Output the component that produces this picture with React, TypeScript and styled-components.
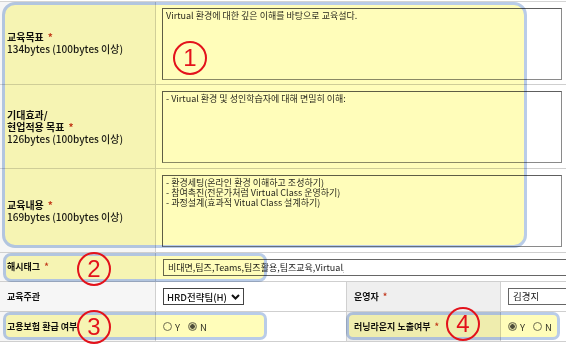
import React from "react";
import styled, { createGlobalStyle } from "styled-components";

const GlobalStyle = createGlobalStyle`
  body {
    margin: 0;
    background: #ffffff;
    font-family: "Noto Sans CJK KR", "Noto Sans", sans-serif;
    color: #222;
  }
`;

const Page = styled.div`
  position: relative;
  width: 566px;
  height: 353px;
  overflow: hidden;
  background: #fff;
`;

const Table = styled.div`
  display: grid;
  grid-template-columns: 156px 190px 155px 1fr;
  margin-top: 1px;
  border-top: 1px solid #d4d4d4;
`;

const LabelCell = styled.div<{ $h: number; $small?: boolean }>`
  grid-column: 1;
  height: ${(p) => p.$h}px;
  box-sizing: border-box;
  padding-left: 7px;
  display: flex;
  flex-direction: column;
  justify-content: center;
  background: #f6f6f6;
  border-right: 1px solid #d0d0d0;
  border-bottom: 1px solid #cfcfcf;
  font-size: ${(p) => (p.$small ? 9 : 10)}px;
  line-height: 12px;
`;

const SideLabel = styled(LabelCell)`
  grid-column: 3;
  border-left: 1px solid #d0d0d0;
  background: #efefef;
`;

const Strong = styled.span`
  font-weight: 700;
  color: #111;
`;

const Req = styled.span`
  color: #c23b22;
  font-weight: 700;
  margin-left: 4px;
`;

const Sub = styled.span`
  font-weight: 500;
  color: #1a1a1a;
`;

const ValueCell = styled.div<{ $span?: string; $h: number }>`
  grid-column: ${(p) => p.$span || "2 / 5"};
  height: ${(p) => p.$h}px;
  box-sizing: border-box;
  padding: 6px 4px 0 6px;
  border-bottom: 1px solid #cfcfcf;
  display: flex;
  align-items: flex-start;
`;

const InlineCell = styled(ValueCell)`
  align-items: center;
  padding: 0 0 0 7px;
`;

const TextBox = styled.div`
  width: 100%;
  height: 72px;
  box-sizing: border-box;
  border: 1px solid #5e5e5e;
  border-right-color: #8a8a8a;
  border-bottom-color: #8a8a8a;
  padding: 2px 3px;
  font-size: 9px;
  line-height: 10px;
  color: #2a2a2a;
  white-space: pre-line;
  overflow: hidden;
`;

const InputBox = styled.div`
  width: 100%;
  height: 17px;
  box-sizing: border-box;
  border: 1px solid #666;
  border-right: none;
  padding: 0 4px;
  font-size: 9.5px;
  line-height: 15px;
  color: #222;
  white-space: nowrap;
  overflow: hidden;
`;

const Clip = styled.span`
  display: inline-block;
  width: 176px;
  overflow: hidden;
  vertical-align: top;
  font-size: 9px;
`;

const Select = styled.div`
  height: 17px;
  box-sizing: border-box;
  border: 1px solid #444;
  padding: 0 3px;
  display: flex;
  align-items: center;
  gap: 4px;
  font-size: 9.5px;
  font-weight: 500;
  color: #111;
`;

const RadioGroup = styled.div`
  display: flex;
  align-items: center;
  gap: 3px;
  font-size: 9.5px;
  color: #333;
`;

const Radio = styled.span<{ $on?: boolean; $first?: boolean }>`
  width: 7px;
  height: 7px;
  border-radius: 50%;
  border: 1px solid #6f6f6f;
  background: ${(p) => (p.$on ? "radial-gradient(circle, #4d4d4d 0 2px, #d8d8d8 2.5px)" : "#fff")};
  margin-left: ${(p) => (p.$first ? 0 : 5)}px;
`;

const Highlight = styled.div<{ $x: number; $y: number; $w: number; $h: number; $r: number }>`
  position: absolute;
  left: ${(p) => p.$x}px;
  top: ${(p) => p.$y}px;
  width: ${(p) => p.$w}px;
  height: ${(p) => p.$h}px;
  box-sizing: border-box;
  border: 3px solid #b9cce8;
  border-radius: ${(p) => p.$r}px;
  background: rgb(255, 253, 186);
  mix-blend-mode: multiply;
  pointer-events: none;
`;

const Badge = styled.div<{ $x: number; $y: number }>`
  position: absolute;
  left: ${(p) => p.$x - 17}px;
  top: ${(p) => p.$y - 17}px;
  width: 34px;
  height: 34px;
  box-sizing: border-box;
  border: 2px solid #e3121b;
  border-radius: 50%;
  display: flex;
  align-items: center;
  justify-content: center;
  color: #e3121b;
  font-family: "Liberation Sans", Arial, sans-serif;
  font-size: 24px;
  line-height: 1;
`;

const Chevron = () => (
  <svg width="9" height="6" viewBox="0 0 9 6">
    <path d="M1 1 L4.5 4.5 L8 1" fill="none" stroke="#111" strokeWidth="2" />
  </svg>
);

export default function App() {
  return (
    <Page>
      <GlobalStyle />
      <Table>
        <LabelCell $h={83}>
          <div>
            <Strong>교육목표</Strong>
            <Req>*</Req>
          </div>
          <Sub>134bytes (100bytes 이상)</Sub>
        </LabelCell>
        <ValueCell $h={83}>
          <TextBox>Virtual 환경에 대한 깊은 이해를 바탕으로 교육설다.</TextBox>
        </ValueCell>

        <LabelCell $h={84}>
          <Strong>기대효과/</Strong>
          <div>
            <Strong>현업적용 목표</Strong>
            <Req>*</Req>
          </div>
          <Sub>126bytes (100bytes 이상)</Sub>
        </LabelCell>
        <ValueCell $h={84}>
          <TextBox>- Virtual 환경 및 성인학습자에 대해 면밀히 이해:</TextBox>
        </ValueCell>

        <LabelCell $h={84}>
          <div>
            <Strong>교육내용</Strong>
            <Req>*</Req>
          </div>
          <Sub>169bytes (100bytes 이상)</Sub>
        </LabelCell>
        <ValueCell $h={84}>
          <TextBox>
            {"- 환경세팅(온라인 환경 이해하고 조성하기)\n- 참여촉진(전문가처럼 Virtual Class 운영하기)\n- 과정설계(효과적 Vitual Class 설계하기)"}
          </TextBox>
        </ValueCell>

        <LabelCell $h={29} $small>
          <div>
            <Strong>해시태그</Strong>
            <Req>*</Req>
          </div>
        </LabelCell>
        <InlineCell $h={29}>
          <InputBox>
            <Clip>비대면,팀즈,Teams,팀즈활용,팀즈교육,Virtual,온라인</Clip>
          </InputBox>
        </InlineCell>

        <LabelCell $h={30} $small>
          <Strong>교육주관</Strong>
        </LabelCell>
        <InlineCell $h={30} $span="2">
          <Select>
            HRD전략팀(H)
            <Chevron />
          </Select>
        </InlineCell>
        <SideLabel $h={30} $small>
          <div>
            <Strong>운영자</Strong>
            <Req>*</Req>
          </div>
        </SideLabel>
        <InlineCell $h={30} $span="4">
          <InputBox>김경지</InputBox>
        </InlineCell>

        <LabelCell $h={30} $small>
          <Strong>고용보험 환급 여부</Strong>
        </LabelCell>
        <InlineCell $h={30} $span="2">
          <RadioGroup>
            <Radio $first />Y<Radio $on />N
          </RadioGroup>
        </InlineCell>
        <SideLabel $h={30} $small>
          <div>
            <Strong>러닝라운지 노출여부</Strong>
            <Req>*</Req>
          </div>
        </SideLabel>
        <InlineCell $h={30} $span="4">
          <RadioGroup>
            <Radio $on $first />Y<Radio />N
          </RadioGroup>
        </InlineCell>
      </Table>

      <Highlight $x={2} $y={2} $w={525} $h={246} $r={13} />
      <Highlight $x={3} $y={253} $w={264} $h={29} $r={8} />
      <Highlight $x={3} $y={312} $w={264} $h={28} $r={7} />
      <Highlight $x={346} $y={312} $w={214} $h={28} $r={7} />

      <Badge $x={190} $y={58}>1</Badge>
      <Badge $x={94} $y={269}>2</Badge>
      <Badge $x={94} $y={327}>3</Badge>
      <Badge $x={463} $y={324}>4</Badge>
    </Page>
  );
}
